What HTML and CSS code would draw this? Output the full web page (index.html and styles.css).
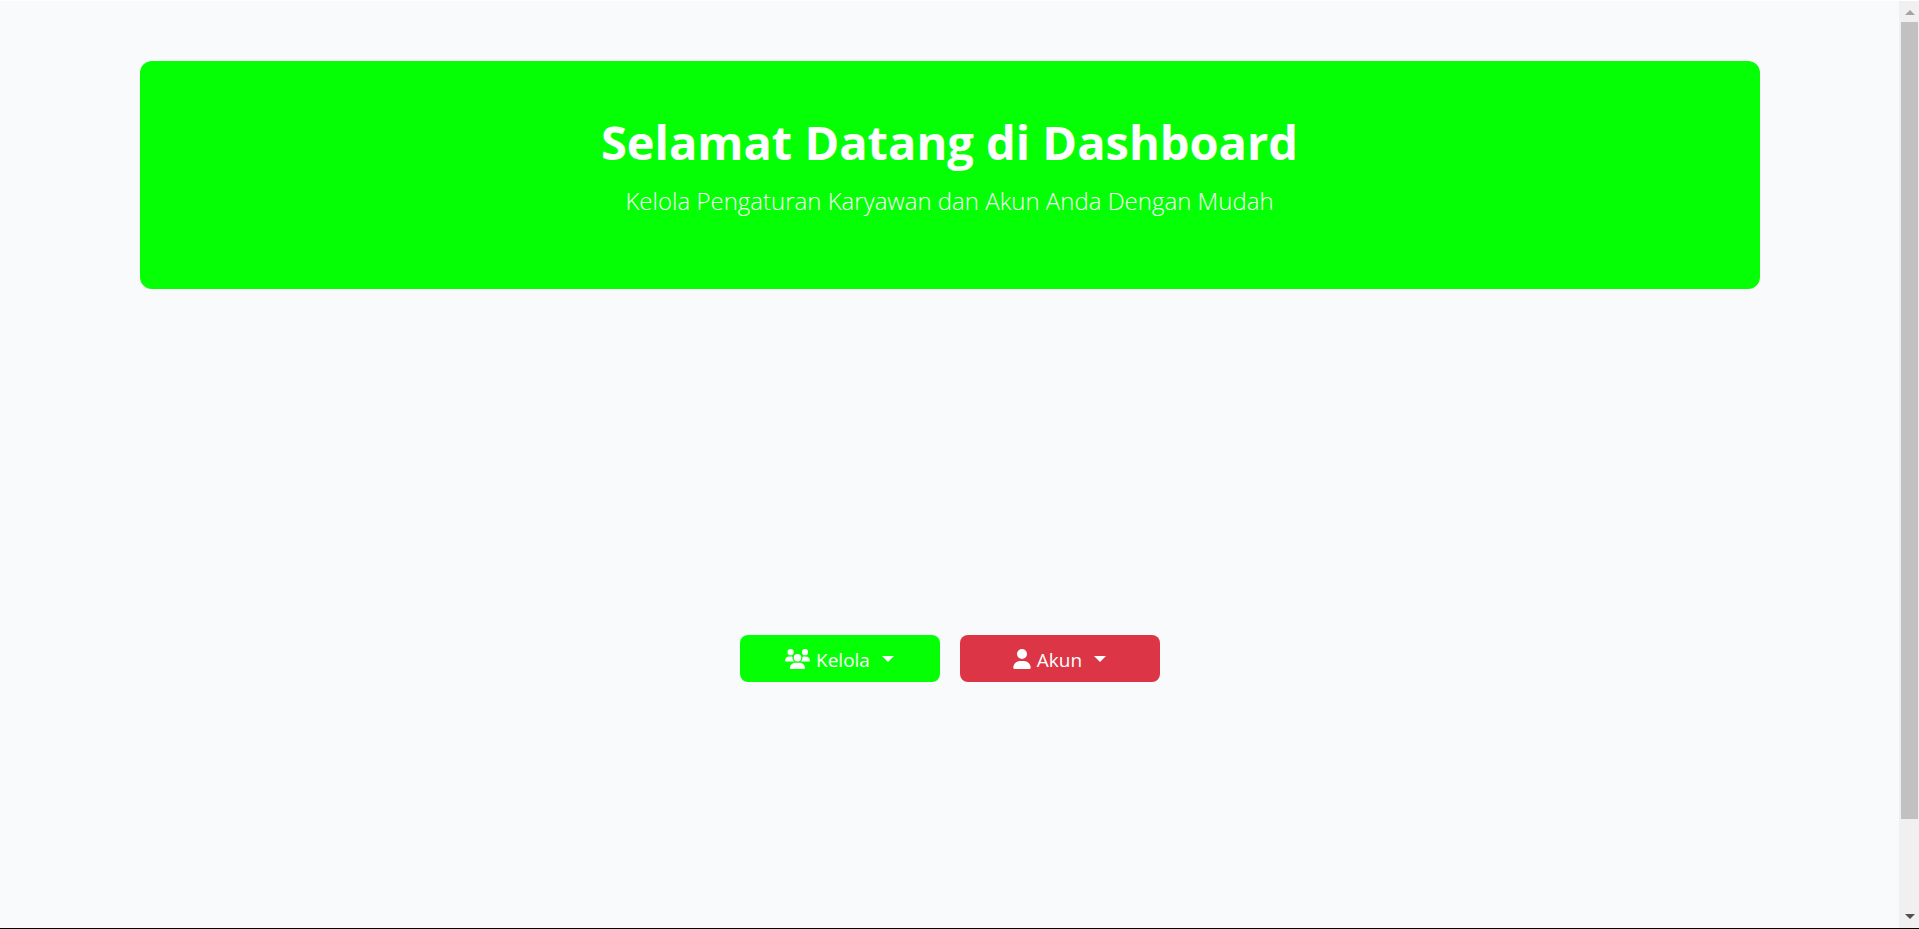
FILE: index.html
```html
<!DOCTYPE html>
<html lang="id">
<head>
<meta charset="utf-8">
<title>Dashboard</title>
<link rel="stylesheet" href="styles.css">
</head>
<body>
<main class="page">
  <header class="hero">
    <h1 class="hero-title">Selamat Datang di Dashboard</h1>
    <p class="hero-lead">Kelola Pengaturan Karyawan dan Akun Anda Dengan Mudah</p>
  </header>
  <nav class="actions">
    <button type="button" class="btn btn-manage" aria-haspopup="true">
      <svg class="icon-users" viewBox="0 0 640 512" aria-hidden="true"><path d="M144 0a80 80 0 1 1 0 160A80 80 0 1 1 144 0zM512 0a80 80 0 1 1 0 160A80 80 0 1 1 512 0zM0 298.7C0 239.8 47.8 192 106.7 192h42.7c15.9 0 31 3.5 44.6 9.7c-1.3 7.2-1.9 14.7-1.9 22.3c0 38.2 16.8 72.5 43.3 96c-.2 0-.4 0-.7 0H21.3C9.6 320 0 310.4 0 298.7zM405.3 320c-.2 0-.4 0-.7 0c26.6-23.5 43.3-57.8 43.3-96c0-7.6-.7-15-1.9-22.3c13.6-6.3 28.7-9.7 44.6-9.7h42.7C592.2 192 640 239.8 640 298.7c0 11.8-9.6 21.3-21.3 21.3H405.3zM224 224a96 96 0 1 1 192 0 96 96 0 1 1 -192 0zM128 485.3C128 411.7 187.7 352 261.3 352H378.7C452.3 352 512 411.7 512 485.3c0 14.7-11.9 26.7-26.7 26.7H154.7c-14.7 0-26.7-11.9-26.7-26.7z"/></svg>
      <span>Kelola</span>
      <span class="caret"></span>
    </button>
    <button type="button" class="btn btn-account" aria-haspopup="true">
      <svg class="icon-user" viewBox="0 0 448 512" aria-hidden="true"><path d="M224 256A128 128 0 1 0 224 0a128 128 0 1 0 0 256zm-45.7 48C79.8 304 0 383.8 0 482.3C0 498.7 13.3 512 29.7 512H418.3c16.4 0 29.7-13.3 29.7-29.7C448 383.8 368.2 304 269.7 304H178.3z"/></svg>
      <span>Akun</span>
      <span class="caret"></span>
    </button>
  </nav>
</main>
<div class="scrollbar" aria-hidden="true">
  <span class="arrow arrow-up"></span>
  <div class="track"><div class="thumb"></div></div>
  <span class="arrow arrow-down"></span>
</div>
</body>
</html>
```
FILE: styles.css
```css
* {
  box-sizing: border-box;
}

body {
  margin: 0;
  min-height: 100vh;
  display: flex;
  background: #f8fafc;
  border-top: 1px solid #fff;
  border-bottom: 1px solid #000;
  font-family: "Open Sans", "Noto Sans", sans-serif;
}

.page {
  flex: 1;
  display: flex;
  flex-direction: column;
  align-items: center;
  padding: 60px 24px;
}

.hero {
  width: 100%;
  max-width: 1620px;
  padding: 51px 24px 60px;
  border-radius: 12px;
  background: #05ff05;
  color: #fff;
  text-align: center;
}

.hero-title {
  margin: 0 0 10px;
  font-size: 47px;
  font-weight: 700;
  line-height: 60px;
}

.hero-lead {
  margin: 0 0 9px;
  font-size: 24px;
  font-weight: 300;
  line-height: 38px;
}

.actions {
  display: flex;
  gap: 20px;
  margin: auto;
  padding-top: 160px;
}

.btn {
  display: flex;
  align-items: center;
  justify-content: center;
  width: 200px;
  height: 47px;
  padding: 0;
  border: 0;
  border-radius: 8px;
  color: #fff;
  font-family: inherit;
  font-size: 19px;
  line-height: 30px;
}

.btn span:not(.caret) {
  padding-top: 2px;
}

.btn-manage {
  background: #05ff05;
}

.btn-account {
  background: #dc3545;
}

.btn svg {
  height: 20px;
  margin-right: 6px;
  fill: currentColor;
}

.icon-users {
  width: 25px;
}

.icon-user {
  width: 18px;
}

.caret {
  margin-left: 12px;
  border-top: 6px solid;
  border-left: 6px solid transparent;
  border-right: 6px solid transparent;
}

.scrollbar {
  width: 20px;
  display: flex;
  flex-direction: column;
  align-items: center;
  justify-content: space-between;
  padding: 9px 1px 9px 2px;
  background: #f0f0f0;
}

.track {
  flex: 1;
  align-self: stretch;
  margin: 7px 0;
}

.thumb {
  height: 90%;
  background: #c1c1c1;
}

.arrow {
  border-left: 5px solid transparent;
  border-right: 5px solid transparent;
}

.arrow-up {
  border-bottom: 5px solid #a3a3a3;
}

.arrow-down {
  border-top: 5px solid #505050;
}
```
